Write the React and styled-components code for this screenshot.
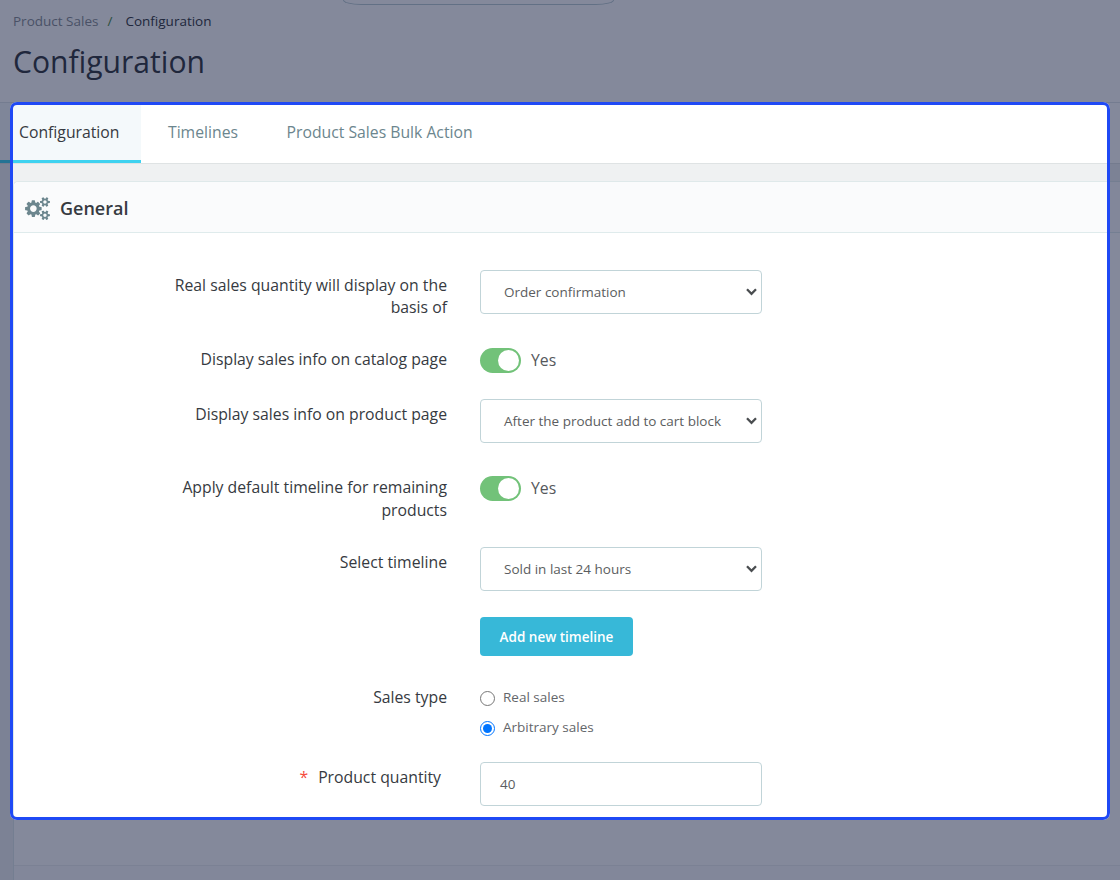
import React, { useState } from "react";
import styled, { createGlobalStyle } from "styled-components";

const GlobalStyle = createGlobalStyle`
  * { box-sizing: border-box; }
  body {
    margin: 0;
    overflow: hidden;
    font-family: "Open Sans", "Liberation Sans", sans-serif;
    color: #363a41;
    background: #eff1f2;
  }
`;

const Page = styled.div`
  position: relative;
  display: flex;
  flex-direction: column;
  width: 1120px;
  height: 880px;
  overflow: hidden;
`;

const Header = styled.header`
  height: 103px;
  flex: none;
  background: #fff;
  border-bottom: 1px solid #dfe5e8;
`;

const SearchBox = styled.div`
  height: 5px;
  width: 271px;
  margin-left: 343px;
  border: 1px solid #bbcdd2;
  border-top: 0;
  border-radius: 0 0 18px 18px / 0 0 5px 5px;
`;

const Breadcrumb = styled.nav`
  display: flex;
  margin: 7px 0 0 13px;
  font-size: 13.5px;
  line-height: 18px;
  color: #363a41;
`;

const Crumb = styled.span`
  color: ${(p) => (p.$current ? "#363a41" : "#8a8f95")};
`;

const Slash = styled.span`
  width: 27px;
  padding-left: 9px;
  color: #4b8a43;
`;

const Title = styled.h1`
  margin: 11px 0 0 13px;
  font-size: 30.1px;
  line-height: 42px;
  font-weight: 400;
`;

const Tabs = styled.div`
  display: flex;
  flex: none;
  height: 61px;
  background: #fff;
  border-bottom: 1px solid #dfe3e4;
`;

const Tab = styled.div`
  padding: 18px 22px 0 ${(p) => (p.$active ? "19px" : "26.5px")};
  font-size: 15.76px;
  line-height: 23px;
  height: 60px;
  white-space: nowrap;
  color: ${(p) => (p.$active ? "#363a41" : "#6c868e")};
  background: ${(p) => (p.$active ? "#f4f9fb" : "transparent")};
  border-bottom: ${(p) => (p.$active ? "3px solid #3ed2f0" : "0")};
`;

const Panel = styled.section`
  flex: 1;
  margin: 17px 0 0 13px;
  background: #fff;
  border: 1px solid #dfe9ea;
  border-width: 1px 0 0 1px;
  border-radius: 5px 0 0 0;
  display: flex;
  flex-direction: column;
`;

const PanelHeader = styled.div`
  display: flex;
  align-items: center;
  height: 51px;
  flex: none;
  padding: 2px 0 0 11px;
  gap: 10px;
  background: #fafbfc;
  border-bottom: 1px solid #dfebec;
  border-radius: 5px 0 0 0;

  svg {
    margin-top: 1px;
  }
`;

const PanelTitle = styled.h2`
  margin: 0;
  font-size: 18px;
  line-height: 24px;
  font-weight: 600;
`;

const Form = styled.div`
  flex: none;
  height: 632px;
  padding-top: 37px;
`;

const PanelFooter = styled.div`
  flex: 1;
  background: #fafbfc;
  border-top: 1px solid #eceff0;
`;

const Row = styled.div`
  display: grid;
  grid-template-columns: 277px 1fr;
  column-gap: 33px;
  padding-left: 156px;
  height: ${(p) => p.$height}px;
`;

const Label = styled.div`
  padding: 4px ${(p) => (p.$required ? "6px" : "0")} 0 0;
  font-size: 15.77px;
  line-height: 22.4px;
  text-align: right;
`;

const Star = styled.span`
  color: #f54c3e;
  margin-right: 10px;
`;

const Field = styled.div`
  display: flex;
  flex-direction: column;
  align-items: flex-start;
`;

const Box = styled.div`
  display: flex;
  align-items: center;
  justify-content: space-between;
  width: 282px;
  height: 44px;
  padding: 0 4px 0 ${(p) => p.$indent}px;
  font-size: 13.5px;
  color: #5b5d60;
  background: #fff;
  border: 1px solid #c1d4d8;
  border-radius: 4px;
`;

const SwitchLine = styled.div`
  display: flex;
  align-items: center;
  gap: 10px;
  margin-top: 4px;
  height: 25px;
  font-size: 15.76px;
  line-height: 21px;
  color: #55585c;
`;

const Track = styled.span`
  display: flex;
  align-items: center;
  justify-content: flex-end;
  width: 41px;
  height: 25px;
  padding-right: 2px;
  border-radius: 13px;
  background: #72c279;
`;

const Thumb = styled.span`
  width: 21px;
  height: 21px;
  border-radius: 50%;
  background: #fff;
`;

const Button = styled.button`
  width: 153px;
  height: 39px;
  margin-top: 26px;
  padding: 1px 0 0;
  border: 0;
  border-radius: 4px;
  background: #37b8d8;
  color: #fff;
  font: 600 13.5px "Open Sans", sans-serif;
`;

const Choice = styled.label`
  display: flex;
  align-items: center;
  gap: 8px;
  height: 30px;
  font-size: 13.5px;
  color: #63666a;

  input {
    width: 15px;
    height: 15px;
    margin: 2px 0 0;
  }
`;

const Spotlight = styled.div`
  position: absolute;
  left: 10px;
  top: 102px;
  width: 1100px;
  height: 718px;
  border: 3px solid #1f49f5;
  border-radius: 7px;
  box-shadow: 0 0 0 1200px rgba(10, 19, 56, 0.5);
  pointer-events: none;
`;

const Cogs = () => (
  <svg width="25" height="23.2" viewBox="0 0 1920 1792" fill="#6c868e">
    <path d="M896 896q0-106-75-181t-181-75-181 75-75 181 75 181 181 75 181-75 75-181zm768 512q0-52-38-90t-90-38-90 38-38 90q0 53 37.5 90.5t90.5 37.5 90.5-37.5 37.5-90.5zm0-1024q0-52-38-90t-90-38-90 38-38 90q0 53 37.5 90.5t90.5 37.5 90.5-37.5 37.5-90.5zm-384 421v185q0 10-7 19.5t-16 10.5l-155 24q-11 35-32 76 34 48 90 115 7 11 7 20 0 12-7 19-23 30-82.5 89.5t-78.5 59.5q-11 0-21-7l-115-90q-37 19-77 31-11 108-23 155-7 24-30 24h-186q-11 0-20-7.5t-10-17.5l-23-153q-34-10-75-31l-118 89q-7 7-20 7-11 0-21-8-144-133-144-160 0-9 7-19 10-14 41-53t47-61q-23-44-35-82l-152-24q-10-1-17-9.5t-7-19.5v-185q0-10 7-19.5t16-10.5l155-24q11-35 32-76-34-48-90-115-7-11-7-20 0-12 7-20 22-30 82-89t79-59q11 0 21 7l115 90q34-18 77-32 11-108 23-154 7-24 30-24h186q11 0 20 7.5t10 17.5l23 153q34 10 75 31l118-89q8-7 20-7 11 0 21 8 144 133 144 160 0 8-7 19-12 16-42 54t-45 60q23 48 34 82l152 23q10 2 17 10.5t7 19.5zm640 533v140q0 16-149 31-12 27-30 52 51 113 51 138 0 4-4 7-122 71-124 71-8 0-46-47t-52-68q-20 2-30 2t-30-2q-14 21-52 68t-46 47q-2 0-124-71-4-3-4-7 0-25 51-138-18-25-30-52-149-15-149-31v-140q0-16 149-31 13-29 30-52-51-113-51-138 0-4 4-7 4-2 35-20t59-34 30-16q8 0 46 46.5t52 67.5q20-2 30-2t30 2q51-71 92-112l6-2q4 0 124 70 4 3 4 7 0 25-51 138 17 23 30 52 149 15 149 31zm0-1024v140q0 16-149 31-12 27-30 52 51 113 51 138 0 4-4 7-122 71-124 71-8 0-46-47t-52-68q-20 2-30 2t-30-2q-14 21-52 68t-46 47q-2 0-124-71-4-3-4-7 0-25 51-138-18-25-30-52-149-15-149-31v-140q0-16 149-31 13-29 30-52-51-113-51-138 0-4 4-7 4-2 35-20t59-34 30-16q8 0 46 46.5t52 67.5q20-2 30-2t30 2q51-71 92-112l6-2q4 0 124 70 4 3 4 7 0 25-51 138 17 23 30 52 149 15 149 31z" />
  </svg>
);

const Select = ({ value }) => (
  <Box $indent={23}>
    {value}
    <svg width="11" height="8" viewBox="0 0 11 8" fill="none" stroke="#4a4d50" strokeWidth="2.3">
      <path d="M1 1.3 5.5 5.8 10 1.3" />
    </svg>
  </Box>
);

const Switch = () => (
  <SwitchLine>
    <Track>
      <Thumb />
    </Track>
    Yes
  </SwitchLine>
);

export default function App() {
  const [type, setType] = useState("arbitrary");
  return (
    <Page>
      <GlobalStyle />
      <Header>
        <SearchBox />
        <Breadcrumb>
          <Crumb>Product Sales</Crumb>
          <Slash>/</Slash>
          <Crumb $current>Configuration</Crumb>
        </Breadcrumb>
        <Title>Configuration</Title>
      </Header>
      <Tabs>
        <Tab $active>Configuration</Tab>
        <Tab>Timelines</Tab>
        <Tab>Product Sales Bulk Action</Tab>
      </Tabs>
      <Panel>
        <PanelHeader>
          <Cogs />
          <PanelTitle>General</PanelTitle>
        </PanelHeader>
        <Form>
          <Row $height={74}>
            <Label>Real sales quantity will display on the basis of</Label>
            <Field><Select value="Order confirmation" /></Field>
          </Row>
          <Row $height={55}>
            <Label>Display sales info on catalog page</Label>
            <Field><Switch /></Field>
          </Row>
          <Row $height={73.25}>
            <Label>Display sales info on product page</Label>
            <Field><Select value="After the product add to cart block" /></Field>
          </Row>
          <Row $height={74.75}>
            <Label>Apply default timeline for remaining products</Label>
            <Field><Switch /></Field>
          </Row>
          <Row $height={135}>
            <Label>Select timeline</Label>
            <Field>
              <Select value="Sold in last 24 hours" />
              <Button>Add new timeline</Button>
            </Field>
          </Row>
          <Row $height={80}>
            <Label>Sales type</Label>
            <Field>
              <Choice>
                <input type="radio" name="type" checked={type === "real"} onChange={() => setType("real")} />
                Real sales
              </Choice>
              <Choice>
                <input type="radio" name="type" checked={type === "arbitrary"} onChange={() => setType("arbitrary")} />
                Arbitrary sales
              </Choice>
            </Field>
          </Row>
          <Row $height={60}>
            <Label $required><Star>*</Star>Product quantity</Label>
            <Field><Box $indent={19}>40</Box></Field>
          </Row>
        </Form>
        <PanelFooter />
      </Panel>
      <Spotlight />
    </Page>
  );
}
